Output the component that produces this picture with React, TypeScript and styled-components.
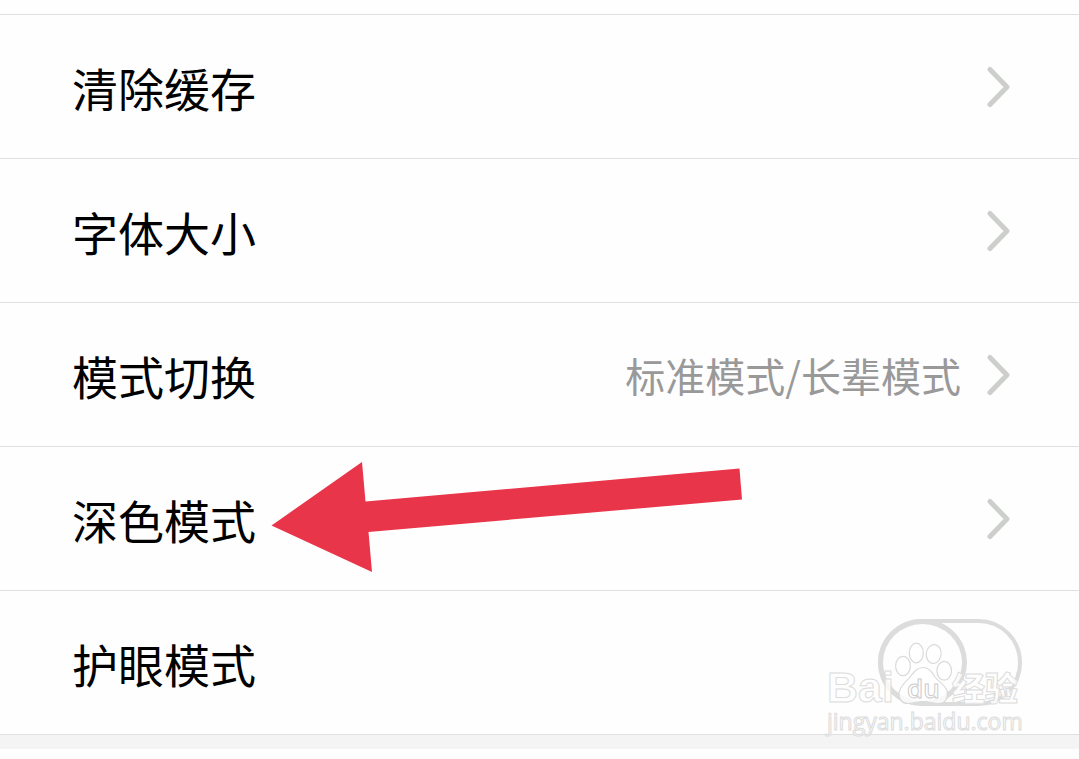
import React from "react";
import styled, { createGlobalStyle } from "styled-components";

const GlobalStyle = createGlobalStyle`
  *, *::before { box-sizing: border-box; }
  body {
    margin: 0;
    background: #fefefe;
    color: #000;
    font-family: "Noto Sans CJK SC", sans-serif;
  }
`;

const Page = styled.main`
  padding-top: 14px;
`;

const List = styled.ul`
  list-style: none;
  margin: 0;
  padding: 0;
  border-top: 1px solid #e0e0e0;
`;

const Item = styled.li`
  position: relative;
  border-bottom: 1px solid #e0e0e0;
`;

const rowLayout = `
  display: flex;
  align-items: center;
  width: 100%;
  height: 143px;
  padding: 0 68px 0 72px;
`;

const RowButton = styled.button`
  ${rowLayout}
  border: 0;
  background: transparent;
  color: inherit;
  font-family: inherit;
  text-align: left;
  cursor: pointer;
`;

const RowLabel = styled.label`
  ${rowLayout}
  padding-right: 57px;
  cursor: pointer;
`;

const Title = styled.span`
  flex: 1;
  font-size: 46px;
  line-height: 64px;
`;

const Value = styled.span`
  margin-right: 26px;
  font-size: 40px;
  line-height: 56px;
  color: #999999;
`;

const Switch = styled.input`
  appearance: none;
  margin: 0;
  width: 144px;
  height: 87px;
  border: 4px solid #dcdcdc;
  border-radius: 44px;
  background: #fefefe;
  cursor: pointer;

  &::before {
    content: "";
    display: block;
    width: 89px;
    height: 87px;
    margin: -4px;
    border: 5px solid #dcdcdc;
    border-radius: 50%;
  }

  &:checked::before {
    margin-left: 51px;
  }
`;

const Footer = styled.div`
  height: 14px;
  background: #f4f4f4;
`;

const Arrow = styled.svg`
  position: absolute;
  left: 270px;
  top: 14px;
  pointer-events: none;
`;

const Watermark = styled.div`
  position: absolute;
  right: 58px;
  top: 49px;
  width: 194px;
  color: rgba(255, 255, 255, 0.8);
  -webkit-text-stroke: 1px #dcdcdc;
  pointer-events: none;
`;

const Brand = styled.div`
  display: flex;
  align-items: flex-end;
  height: 67px;
  white-space: nowrap;
`;

const Latin = styled.span`
  font-family: "Liberation Sans", sans-serif;
  font-size: 43px;
  line-height: 40px;
  font-weight: 700;
`;

const Hanzi = styled.span`
  font-size: 33px;
  line-height: 40px;
  font-weight: 900;
`;

const Address = styled.div`
  font-family: "Open Sans", sans-serif;
  font-size: 23px;
  line-height: 28px;
`;

const Chevron = () => (
  <svg width="24" height="42" viewBox="0 0 24 42" fill="none" aria-hidden="true">
    <path d="M3 3.500 L20 21 L3 38.500" stroke="#cdcfcc" strokeWidth="5" strokeLinecap="round" strokeLinejoin="round" />
  </svg>
);

const Paw = () => (
  <svg width="58" height="68" viewBox="0 0 58 68" aria-hidden="true">
    <g fill="#ffffff" fillOpacity="0.8" stroke="#dadada" strokeWidth="1.2">
      <ellipse cx="9" cy="27" rx="7.4" ry="9.6" />
      <ellipse cx="22.300" cy="14" rx="7" ry="9.8" />
      <ellipse cx="39.700" cy="15" rx="7.4" ry="9.4" transform="rotate(8 39.7 15)" />
      <ellipse cx="50.200" cy="31.7" rx="7.3" ry="9.4" />
      <path d="M29 28.500 C23 28.500 20 33 16 38 C12 43 6 47 5 54 C4.500 60 8 64.500 14 64.500 C20 64.500 24 62.500 29 62.500 C35 62.500 40 64.800 46 64.500 C52 64 54.500 58 53 51.500 C51 46 45 43 41 38 C38 33 35 28.500 29 28.500 Z" />
    </g>
    <text x="13" y="59" fontFamily="Open Sans, sans-serif" fontSize="26" fontWeight="600" fill="#ffffff" stroke="#cccccc" strokeWidth="1">du</text>
  </svg>
);

type Setting = { title: string; value?: string; marked?: boolean };

const settings: Setting[] = [
  { title: "清除缓存" },
  { title: "字体大小" },
  { title: "模式切换", value: "标准模式/长辈模式" },
  { title: "深色模式", marked: true },
];

export default function App() {
  return (
    <Page lang="zh-CN">
      <GlobalStyle />
      <List>
        {settings.map(({ title, value, marked }) => (
          <Item key={title}>
            <RowButton type="button">
              <Title>{title}</Title>
              {value && <Value>{value}</Value>}
              <Chevron />
            </RowButton>
            {marked && (
              <Arrow width="474" height="114" viewBox="0 0 474 114" aria-hidden="true">
                <path d="M1.500 64.500 L92 1 L95.500 40.500 L469.500 7.500 L472 38.500 L98.500 71 L102 111 Z" fill="#e93549" />
              </Arrow>
            )}
          </Item>
        ))}
        <Item>
          <RowLabel htmlFor="eye-care">
            <Title>护眼模式</Title>
            <Switch id="eye-care" type="checkbox" />
          </RowLabel>
          <Watermark>
            <Brand>
              <Latin>Bai</Latin>
              <Paw />
              <Hanzi>经验</Hanzi>
            </Brand>
            <Address>jingyan.baidu.com</Address>
          </Watermark>
        </Item>
      </List>
      <Footer />
    </Page>
  );
}
